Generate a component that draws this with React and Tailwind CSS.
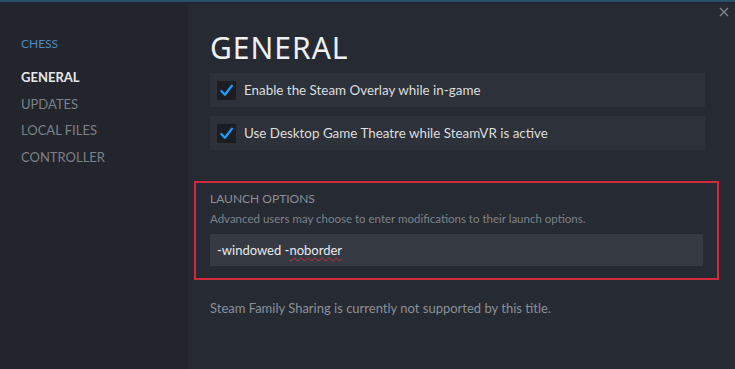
import React from 'react';

const navItems = ['UPDATES', 'LOCAL FILES', 'CONTROLLER'];

function CheckRow({ label }) {
  return (
    <div className="flex h-[34px] w-[495px] items-center gap-2 bg-[#2d3139] pl-[7px]">
      <div className="flex h-[19px] w-[19px] items-center justify-center bg-[#1b1d23]">
        <svg width="15" height="15" viewBox="0 0 16 16">
          <path d="M2.5 8.5 L6.3 12.5 L13.8 2.8" fill="none" stroke="#1a9fff" strokeWidth="2.4" strokeLinecap="round" strokeLinejoin="round" />
        </svg>
      </div>
      <span className="text-[13.4px] text-[#dcdedf]">{label}</span>
    </div>
  );
}

export default function App() {
  return (
    <div
      className="relative flex h-[369px] w-[735px] flex-col overflow-hidden bg-[#262a32]"
      style={{ fontFamily: 'Lato, "Noto Sans", sans-serif' }}
    >
      {/* top strip */}
      <div className="h-[2px] bg-[#25516a]" />
      <div className="h-[2px] bg-[#222530]" />

      <div className="flex flex-1">
        {/* sidebar */}
        <div className="flex w-[188px] flex-col bg-[#23252c] pl-[21px] pt-[31px]">
          <div className="text-[12px] text-[#4f88c2]">CHESS</div>
          <div className="mt-[15px] text-[13px] font-bold text-[#e6e8ea]">GENERAL</div>
          {navItems.map((item) => (
            <div key={item} className="mt-[7px] text-[13px] text-[#7c8188]">
              {item}
            </div>
          ))}
        </div>

        {/* main panel */}
        <div className="relative flex flex-1 flex-col pl-[22px]">
          <button className="absolute right-[5px] top-[2px] text-[#7f8590]">
            <svg width="12" height="12" viewBox="0 0 12 12">
              <path d="M2 2 L10 10 M10 2 L2 10" stroke="currentColor" strokeWidth="1.4" />
            </svg>
          </button>

          <h1
            className="mt-[25px] text-[30px] font-normal leading-[38px] tracking-[1px] text-[#eef0f2]"
            style={{ fontFamily: '"Noto Sans", sans-serif' }}
          >
            GENERAL
          </h1>

          <div className="mt-[6px] flex flex-col gap-[9px]">
            <CheckRow label="Enable the Steam Overlay while in-game" />
            <CheckRow label="Use Desktop Game Theatre while SteamVR is active" />
          </div>

          <div className="-ml-[16px] mt-[31px] w-[525px] border-2 border-[#d12a3a] pb-[12px] pl-[14px] pt-[7px]">
            <div className="text-[12px] text-[#8b9098]">LAUNCH OPTIONS</div>
            <div className="mt-[2px] text-[11.5px] text-[#7e838b]">
              Advanced users may choose to enter modifications to their launch options.
            </div>
            <div className="mt-[7px] flex h-[32px] w-[493px] items-center bg-[#353a43] pl-[7px] text-[13px] text-[#e8eaec]">
              -windowed -
              <span className="underline decoration-wavy decoration-[#d12a3a] decoration-1 underline-offset-2">noborder</span>
            </div>
          </div>

          <div className="mt-[19px] text-[13px] text-[#8b9098]">
            Steam Family Sharing is currently not supported by this title.
          </div>
        </div>
      </div>
    </div>
  );
}
